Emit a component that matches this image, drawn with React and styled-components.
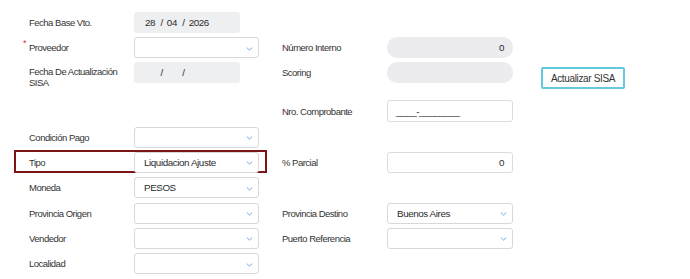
import React from 'react'
import styled, { createGlobalStyle, css } from 'styled-components'

const GlobalStyle = createGlobalStyle`
  body {
    margin: 0;
    background: #fff;
    font-family: "Liberation Sans", Arial, sans-serif;
    color: #333;
  }
`
const Form = styled.div`
  padding: 12px 0 0 14px;
  display: flex;
  flex-direction: column;
  height: 279px;
  box-sizing: border-box;
  overflow: hidden;
`
const Row = styled.div`
  display: flex;
  align-items: ${p => (p.$top ? 'flex-start' : 'center')};
  height: ${p => p.$h || 21}px;
  margin-top: ${p => (p.$mt === undefined ? 4.33 : p.$mt)}px;
  flex-shrink: 0;
`
const Half = styled.div`
  position: relative;
  display: flex;
  align-items: ${p => (p.$top ? 'flex-start' : 'center')};
  width: ${p => p.$w || 253}px;
  height: 100%;
  padding-left: 15px;
  box-sizing: border-box;
  flex-shrink: 0;
  ${p => p.$marked && css`
    &::before {
      content: '';
      position: absolute;
      left: 0;
      right: 0;
      top: -2px;
      bottom: 0;
      border: 2px solid #7c1616;
      pointer-events: none;
    }
  `}
`
const Label = styled.div`
  position: relative;
  width: 105px;
  flex-shrink: 0;
  font-size: 9.5px;
  letter-spacing: -0.5px;
  line-height: ${p => (p.$wrap ? '10.5px' : '21px')};
  padding-top: ${p => (p.$wrap ? 5 : 0)}px;
  color: #333;
`
const Star = styled.span`
  position: absolute;
  left: -6px;
  top: -4px;
  color: #e0264a;
  font-size: 9px;
`
const Field = styled.div`
  box-sizing: border-box;
  width: ${p => p.$w || 125}px;
  height: ${p => p.$h || 21}px;
  display: flex;
  align-items: center;
  font-size: 9.8px;
  letter-spacing: -0.4px;
  color: #2b2b2b;
  flex-shrink: 0;
`
const Select = styled(Field)`
  position: relative;
  border: 1px solid #d8d8d8;
  border-radius: 3px;
  padding-left: 9px;
  background: #fff;
`
const Chevron = styled.svg`
  position: absolute;
  right: 5px;
  top: 50%;
  margin-top: -1px;
`
const Input = styled(Field)`
  border: 1px solid #dcdcdc;
  border-radius: 3px;
  padding: 0 8px;
  justify-content: ${p => (p.$right ? 'flex-end' : 'flex-start')};
  background: #fff;
`
const DateBox = styled(Field)`
  width: 106px;
  background: #eeeff1;
  border-radius: 3px;
  padding-left: 11px;
`
const Seg = styled.span`
  width: ${p => p.$w || 11.5}px;
`
const Slash = styled.span`
  margin: 0 4px;
`
const Pill = styled(Field)`
  background: #ececee;
  border-radius: 10px;
  justify-content: flex-end;
  padding-right: 9px;
`
const Button = styled.button`
  margin: 5px 0 0 28px;
  width: 84px;
  height: 22px;
  box-sizing: border-box;
  border: 2px solid #62c9df;
  border-radius: 2px;
  background: #fff;
  color: #333;
  font-family: inherit;
  font-size: 10px;
  letter-spacing: -0.35px;
  padding: 0;
`

const Drop = ({ value, w }) => (
  <Select $w={w}>
    {value}
    <Chevron width="7" height="4" viewBox="0 0 7 4">
      <path d="M0.8 0.6 L3.5 3.1 L6.2 0.6" fill="none" stroke="#7aa6dc" strokeWidth="1" />
    </Chevron>
  </Select>
)

const DateField = ({ d, m, y }) => (
  <DateBox>
    <Seg>{d}</Seg>
    <Slash>/</Slash>
    <Seg>{m}</Seg>
    <Slash>/</Slash>
    <Seg $w={24}>{y}</Seg>
  </DateBox>
)

function App() {
  return (
    <>
      <GlobalStyle />
      <Form>
        <Row $h={20} $mt={0}>
          <Half>
            <Label>Fecha Base Vto.</Label>
            <DateField d="28" m="04" y="2026" />
          </Half>
        </Row>
        <Row $mt={5}>
          <Half>
            <Label><Star>*</Star>Proveedor</Label>
            <Drop />
          </Half>
          <Half $w={246}>
            <Label>Número Interno</Label>
            <Pill $w={126}>0</Pill>
          </Half>
        </Row>
        <Row $h={27} $top>
          <Half $top>
            <Label $wrap>Fecha De Actualización SISA</Label>
            <DateField />
          </Half>
          <Half $top $w={246}>
            <Label>Scoring</Label>
            <Pill $w={126} />
          </Half>
          <Button>Actualizar SISA</Button>
        </Row>
        <Row $h={22} $mt={11}>
          <Half />
          <Half $w={246}>
            <Label>Nro. Comprobante</Label>
            <Input $w={126} $h={22}>____-________</Input>
          </Half>
        </Row>
        <Row>
          <Half>
            <Label>Condición Pago</Label>
            <Drop />
          </Half>
        </Row>
        <Row>
          <Half $marked>
            <Label>Tipo</Label>
            <Drop value="Liquidacion Ajuste" />
          </Half>
          <Half $w={246}>
            <Label>% Parcial</Label>
            <Input $w={126} $right>0</Input>
          </Half>
        </Row>
        <Row>
          <Half>
            <Label>Moneda</Label>
            <Drop value="PESOS" />
          </Half>
        </Row>
        <Row>
          <Half>
            <Label>Provincia Origen</Label>
            <Drop />
          </Half>
          <Half $w={246}>
            <Label>Provincia Destino</Label>
            <Drop w={126} value="Buenos Aires" />
          </Half>
        </Row>
        <Row>
          <Half>
            <Label>Vendedor</Label>
            <Drop />
          </Half>
          <Half $w={246}>
            <Label>Puerto Referencia</Label>
            <Drop w={126} />
          </Half>
        </Row>
        <Row>
          <Half>
            <Label>Localidad</Label>
            <Drop />
          </Half>
        </Row>
        <Row>
          <Half>
            <Label />
            <Drop />
          </Half>
        </Row>
      </Form>
    </>
  )
}

export default App
